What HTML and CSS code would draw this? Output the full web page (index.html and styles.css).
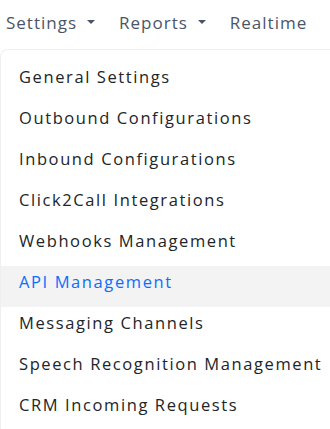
FILE: index.html
```html
<!DOCTYPE html>
<html lang="en">
<head>
    <meta charset="UTF-8">
    <meta name="viewport" content="width=device-width, initial-scale=1.0">
    <title>Settings Menu</title>
    <link rel="stylesheet" href="styles.css">
</head>
<body>

<nav class="topnav">
    <a class="nav-link" href="#">Settings <span class="caret"></span></a>
    <a class="nav-link" href="#">Reports <span class="caret"></span></a>
    <a class="nav-link" href="#">Realtime</a>
</nav>

<div class="dropdown-menu">
    <a class="dropdown-item" href="#">General Settings</a>
    <a class="dropdown-item" href="#">Outbound Configurations</a>
    <a class="dropdown-item" href="#">Inbound Configurations</a>
    <a class="dropdown-item" href="#">Click2Call Integrations</a>
    <a class="dropdown-item" href="#">Webhooks Management</a>
    <a class="dropdown-item active" href="#">API Management</a>
    <a class="dropdown-item" href="#">Messaging Channels</a>
    <a class="dropdown-item" href="#">Speech Recognition Management</a>
    <a class="dropdown-item" href="#">CRM Incoming Requests</a>
</div>

</body>
</html>
```

FILE: styles.css
```css
body {
    margin: 0;
    font-family: "Open Sans", Arial, sans-serif;
    background: #ffffff;
    overflow: hidden;
}
.topnav {
    display: flex;
    align-items: center;
    height: 44px;
    padding-left: 6px;
    gap: 24px;
}
.nav-link {
    display: flex;
    align-items: center;
    gap: 10px;
    color: #4a5568;
    font-size: 17px;
    letter-spacing: 1px;
    text-decoration: none;
}
.caret {
    width: 0;
    height: 0;
    border-left: 4px solid transparent;
    border-right: 4px solid transparent;
    border-top: 4px solid #4a5568;
}
.dropdown-menu {
    margin-top: 5px;
    margin-right: -10px;
    padding-top: 11px;
    border: 1px solid #efefef;
    border-right: none;
    border-radius: 8px 0 0 0;
    display: flex;
    flex-direction: column;
}
.dropdown-item {
    display: block;
    height: 41px;
    box-sizing: border-box;
    padding: 4px 0 0 18px;
    line-height: 24px;
    color: #212529;
    font-size: 16.5px;
    letter-spacing: 1.6px;
    text-decoration: none;
    white-space: nowrap;
}
.dropdown-item.active {
    background: #f3f3f3;
    color: #0d6efd;
}
```
